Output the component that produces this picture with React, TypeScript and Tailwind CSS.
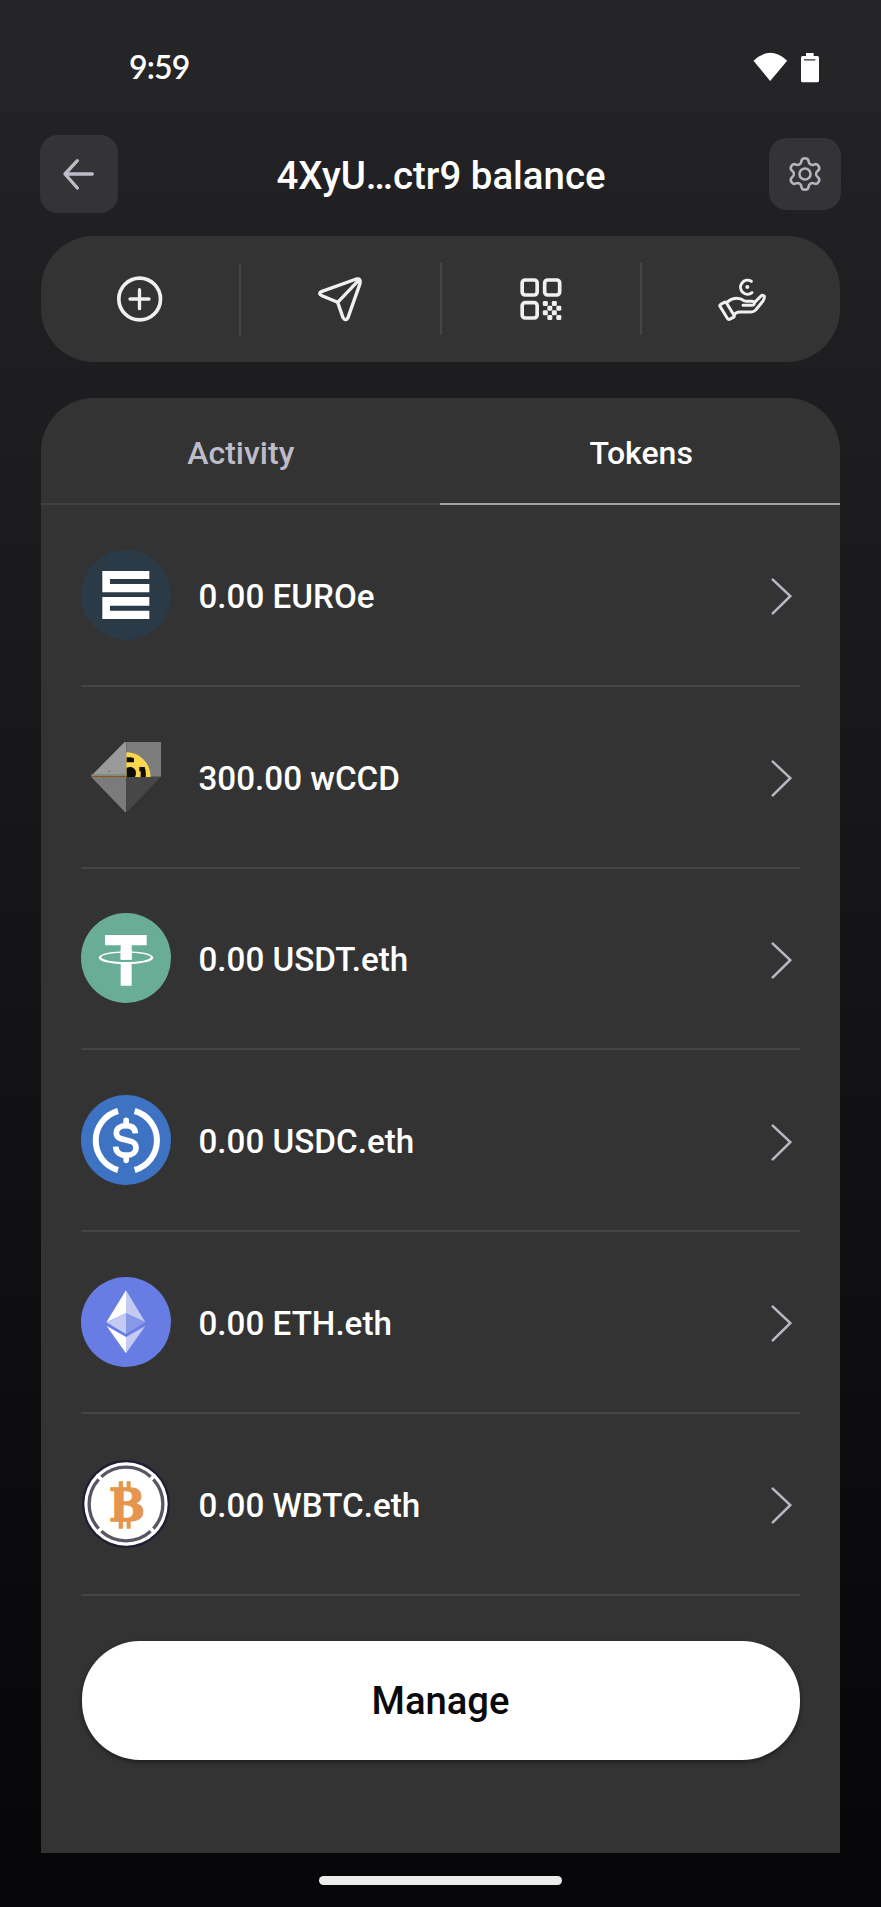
import type { ReactNode } from "react";

function EuroeLogo() {
  return (
    <svg viewBox="155 495 270 270" className="size-[90px]">
      <circle cx="290" cy="630" r="135" fill="#2a3a47" />
      <path fill="#fff" d="M219 558h141v24H242v15h118v25H219zM219 636h141v26H242v15h118v25H219z" />
    </svg>
  );
}

function WccdLogo() {
  return (
    <svg viewBox="34 36 270 270" className="size-[90px]">
      <path d="M64 168 165 66h5v104H66z" fill="#9a9a9a" />
      <path d="M170 66h104v104H170z" fill="#7d7d7d" />
      <path d="M64 170h106v106h-4z" fill="#7b7b7b" />
      <path d="M170 170h104L172 276h-2z" fill="#474747" />
      <path d="M170 97a72 74 0 0 1 73 74h-73z" fill="#fbd74f" />
      <path d="M171 112h10q6 0 12 3v12h-22zM171 143q7-3 13-2 14 3 15 17 0 7-3 13h-25zM209 141h16q5 14 3 30h-15v-17h-4z" fill="#0c0c08" />
      <path d="M67 162h103v4H64z" fill="#73918a" />
      <path d="M64 167h106v4H66z" fill="#8f5518" />
      <circle cx="119" cy="154" r="2" fill="#444" />
    </svg>
  );
}

function UsdtLogo() {
  return (
    <svg viewBox="34 580 270 270" className="size-[90px]">
      <circle cx="169" cy="715" r="135" fill="#6aad96" />
      <path d="M106 646h125v31h-45v43h-33v-43h-47zM153 731h33v67h-33z" fill="#fff" />
      <path
        fillRule="evenodd"
        d="M87 714a82 19.500 0 1 0 164 0a82 19.500 0 1 0-164 0M95 713a74 14 0 1 1 148 0a74 14 0 1 1-148 0"
        fill="#fff"
      />
      <path d="M153 690h33v30h-33z" fill="#fff" />
    </svg>
  );
}

function UsdcLogo() {
  return (
    <svg viewBox="34 45 270 270" className="size-[90px]" fill="none" stroke="#fff">
      <circle cx="169" cy="180" r="135" fill="#3e73c4" stroke="none" />
      <path d="M145 93a92 92 0 0 0 0 177M195 93a92 92 0 0 1 0 177" strokeWidth="18" />
      <path
        d="M197 160c-1-18-14-23-28-23-18 0-29 9-29 22 0 31 59 11 59 44 0 14-12 23-30 23-17 0-30-8-31-26"
        strokeWidth="17"
      />
      <path d="M169.500 121v15M169.500 226v15" strokeWidth="17" strokeLinecap="round" />
    </svg>
  );
}

function EthLogo() {
  return (
    <svg viewBox="34 591 270 270" className="size-[90px]">
      <circle cx="169" cy="726" r="135" fill="#687de3" />
      <path d="M169 631 110 727l59-27z" fill="#fff" />
      <path d="m169 631 58 96-58-27z" fill="#c3cbf4" />
      <path d="m110 727 59-27v62z" fill="#c3cbf4" />
      <path d="m227 727-58-27v62z" fill="#8798e9" />
      <path d="m111 738 58 33v49z" fill="#fff" />
      <path d="m227 738-58 33v49z" fill="#c3cbf4" />
    </svg>
  );
}

function WbtcLogo() {
  return (
    <svg viewBox="34 55 270 270" className="size-[90px]">
      <circle cx="169" cy="190" r="132" fill="#211c35" />
      <circle cx="169" cy="190" r="125" fill="#fff" />
      <g fill="none" stroke="#5a5564" strokeWidth="10">
        <path d="M95 108a110 110 0 0 1 148 0M95 272a110 110 0 0 0 148 0M87 116a110 110 0 0 0 0 148M251 116a110 110 0 0 1 0 148" />
      </g>
      <path d="M147 122h13v24h-13zM171 122h12v24h-12zM147 238h13v26h-13zM171 238h12v26h-12z" fill="#e5954d" />
      <text
        x="118"
        y="241"
        textLength="108"
        lengthAdjust="spacingAndGlyphs"
        fontSize="134"
        fontWeight="700"
        fontFamily="DejaVu Serif, serif"
        fill="#e5954d"
        stroke="#e5954d"
        strokeWidth="4"
      >
        B
      </text>
    </svg>
  );
}

const tokens: { label: string; logo: ReactNode }[] = [
  { label: "0.00 EUROe", logo: <EuroeLogo /> },
  { label: "300.00 wCCD", logo: <WccdLogo /> },
  { label: "0.00 USDT.eth", logo: <UsdtLogo /> },
  { label: "0.00 USDC.eth", logo: <UsdcLogo /> },
  { label: "0.00 ETH.eth", logo: <EthLogo /> },
  { label: "0.00 WBTC.eth", logo: <WbtcLogo /> },
];

function StatusBar() {
  return (
    <div className="flex h-[111px] shrink-0 items-start justify-between bg-[#252527] pr-[61px] pl-[129px]">
      <span className="mt-[47px] font-['Lato'] text-[32px] leading-[40px] font-semibold tracking-[-0.8px] text-white">9:59</span>
      <div className="mt-[52px] flex gap-[12px]">
        <svg viewBox="940 156 104 93" className="h-[31px] w-[35px]" fill="#fff">
          <path d="M941 182q50-47 101 0l-51 61z" />
        </svg>
        <svg viewBox="1080 156 60 93" className="h-[31px] w-[20px]">
          <path d="M1098 159h23v9h11q5 0 5 5v69q0 5-5 5h-44q-5 0-5-5v-69q0-5 5-5h10z" fill="#fff" />
          <path d="M1092 177h34v5h-34z" fill="#67676b" />
        </svg>
      </div>
    </div>
  );
}

function Header() {
  return (
    <header className="flex h-[125px] shrink-0 items-start justify-between pt-6 pr-10 pl-10">
      <button className="flex size-[78px] items-center justify-center rounded-[18px] bg-[#343436]">
        <svg viewBox="186 470 102 102" className="size-[34px]" fill="none" stroke="#bdbdca" strokeWidth="10" strokeLinecap="round" strokeLinejoin="round">
          <path d="M277 521H195M232 481l-37 40 37 42" />
        </svg>
      </button>
      <h1 className="mt-[19px] mr-[5px] text-[38.400px] leading-[44px] font-medium text-white">4XyU…ctr9 balance</h1>
      <button className="mt-[3px] flex size-[72px] items-center justify-center rounded-[18px] bg-[#343436]">
        <svg viewBox="0 0 24 24" className="size-[38px]" fill="none" stroke="#b5b5c0" strokeWidth="1.600">
          <path d="M9.671 4.136a2.34 2.34 0 0 1 4.659 0 2.34 2.34 0 0 0 3.319 1.915 2.34 2.34 0 0 1 2.33 4.033 2.34 2.34 0 0 0 0 3.831 2.34 2.34 0 0 1-2.33 4.033 2.34 2.34 0 0 0-3.319 1.915 2.34 2.34 0 0 1-4.659 0 2.34 2.34 0 0 0-3.32-1.915 2.34 2.34 0 0 1-2.33-4.033 2.34 2.34 0 0 0 0-3.831A2.34 2.34 0 0 1 6.35 6.051a2.34 2.34 0 0 0 3.319-1.915" />
          <circle cx="12" cy="12" r="3.500" />
        </svg>
      </button>
    </header>
  );
}

function ActionBar() {
  return (
    <nav className="mx-auto flex h-[126px] w-[799px] shrink-0 items-center rounded-[53px] bg-[#333333]">
      <button className="flex flex-1 items-center justify-center">
        <svg viewBox="255 147 150 150" className="size-[50px]" fill="none" stroke="#eef0f2" strokeWidth="11" strokeLinecap="round">
          <circle cx="329" cy="222" r="62.500" />
          <path d="M300 222h57M328.500 194v57" strokeWidth="10" />
        </svg>
      </button>
      <span className="h-[72px] w-[2px] bg-[#454545]" />
      <button className="flex flex-1 items-center justify-center">
        <svg viewBox="855 147 150 150" className="size-[50px]" fill="none" stroke="#eef0f2" strokeWidth="10" strokeLinecap="round" strokeLinejoin="round">
          <path d="M979 162 876 199Q862 205 876 212L923 232 939 278Q947 290 954 278L990 176Q994 159 979 162zM923 232 988 164" />
        </svg>
      </button>
      <span className="h-[72px] w-[2px] bg-[#454545]" />
      <button className="flex flex-1 items-center justify-center">
        <svg viewBox="228 147 150 150" className="size-[50px]">
          <g fill="none" stroke="#eef0f2" strokeWidth="11">
            <rect x="246.500" y="165" width="45" height="45" rx="9" />
            <rect x="314" y="165" width="45" height="45" rx="9" />
            <rect x="246.500" y="233" width="45" height="46" rx="9" />
          </g>
          <g fill="#eef0f2">
            {[228, 256].map((y) => (
              <g key={y}>
                <rect x="308.500" y={y} width="15" height="15" rx="4" />
                <rect x="335.500" y={y} width="15" height="15" rx="4" />
                <rect x="322" y={y + 14} width="15" height="15" rx="4" />
                <rect x="349" y={y + 14} width="15" height="15" rx="4" />
              </g>
            ))}
          </g>
        </svg>
      </button>
      <span className="h-[72px] w-[2px] bg-[#454545]" />
      <button className="flex flex-1 items-center justify-center">
        <svg viewBox="822 142 162 162" className="size-[54px]" fill="none" stroke="#eef0f2" strokeWidth="9" strokeLinecap="round" strokeLinejoin="round">
          <path d="M842 239 853 233Q857 231 860 236L882 272Q884 276 880 278L868 284Q865 285 862 281L840 245Q838 242 842 239z" />
          <path d="M862 232C878 219 896 217 914 229Q916 230 920 230H937Q946 232 942 239Q940 242 934 242H909M943 234 962 215Q968 209 973 215Q974 221 969 229L947 256Q941 262 933 262H899Q888 262 882 271" />
          <path d="M934 170a21 21 0 1 0 2 34" />
          <circle cx="922" cy="187" r="6" fill="#eef0f2" stroke="none" />
        </svg>
      </button>
    </nav>
  );
}

export default function App() {
  return (
    <div className="flex h-[1907px] w-[881px] flex-col bg-linear-to-b from-[#242426] to-[#060608] font-['Roboto',sans-serif]">
      <StatusBar />
      <Header />
      <ActionBar />
      <main className="mx-auto mt-[36px] flex h-[1455px] w-[799px] shrink-0 flex-col rounded-t-[53px] bg-[#333333]">
        <div className="flex h-[107px] shrink-0 text-[32px] leading-[40px] font-medium">
          <button className="flex-1 border-b-2 border-[#404040] pt-[4px] pl-[1px] text-[#bdbdca]">Activity</button>
          <button className="flex-1 border-b-2 border-[#a3a1a3] pt-[4px] pl-[3px] text-white">Tokens</button>
        </div>
        <ul className="mx-auto flex w-[719px] flex-col">
          {tokens.map(({ label, logo }) => (
            <li key={label} className="flex h-[181.750px] items-center border-b-2 border-[#454545]">
              {logo}
              <span className="mt-[4px] ml-[27.500px] text-[33.200px] leading-[40px] font-medium text-white">{label}</span>
              <svg viewBox="993 580 62 110" className="mt-[4px] mr-[8px] ml-auto h-[37px] w-[21px]" fill="none" stroke="#b8b8c4" strokeWidth="7.500" strokeLinecap="round">
                <path d="m998 585 52 49-52 51" />
              </svg>
            </li>
          ))}
        </ul>
        <button className="mx-auto mt-[45px] h-[119px] w-[718px] shrink-0 rounded-[58px] bg-white pt-[3px] text-[38.200px] font-medium text-[#0a0a0a] shadow-[0_2px_5px_rgba(0,0,0,0.45)]">
          Manage
        </button>
      </main>
      <div className="mx-auto mt-[23px] h-[9px] w-[243px] rounded-full bg-[#ececec]" />
    </div>
  );
}
